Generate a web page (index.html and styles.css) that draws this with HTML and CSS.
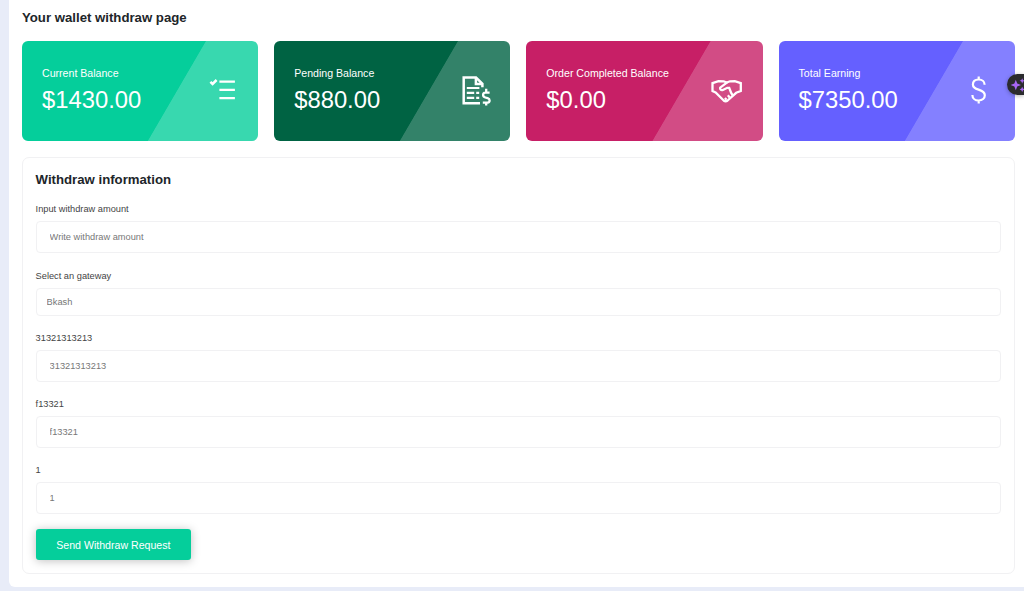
FILE: index.html
```
<!DOCTYPE html>
<html lang="en">
<head>
    <meta charset="UTF-8">
    <meta name="viewport" content="width=device-width, initial-scale=1.0">
    <title>Wallet Withdraw</title>
    <link rel="stylesheet" href="styles.css">
</head>
<body>
    <div class="page">
        <h1>Your wallet withdraw page</h1>

        <!-- Balance cards -->
        <div class="cards">
            <div class="card green">
                <div class="card-text">
                    <p>Current Balance</p>
                    <h2>$1430.00</h2>
                </div>
                <svg class="card-icon" viewBox="0 0 34 34">
                    <path d="M5.4 7.8l2.2 2.2 4-4" stroke-width="2.5"/>
                    <path d="M14.4 7.7h15.5M14.4 15.8h15.5M14.4 24.1h15.5" stroke-width="2.3"/>
                </svg>
            </div>
            <div class="card dark">
                <div class="card-text">
                    <p>Pending Balance</p>
                    <h2>$880.00</h2>
                </div>
                <svg class="card-icon" viewBox="0 0 34 34">
                    <path d="M23 29.2H6.7V3.4H19l6.4 6.4v3.4M18.9 3.6v6.3h6.4" stroke-width="2.5"/>
                    <path d="M9.8 14h12.6M9.8 18.9h7.4M9.8 23.8h7.4M19.2 18.9h3M19.2 23.8h3" stroke-width="2.2"/>
                    <path d="M32.6 18.6h-4.3a2.4 2.4 0 0 0-2.2 2.4c0 1.400.9 2.100 2.200 2.500l2.300.7c1.300.4 2 1.100 2 2.300a2.200 2.200 0 0 1-2 2.200h-4.800M29.200 14.800v3.800M29.200 28.600v3" stroke-width="2.3"/>
                </svg>
            </div>
            <div class="card pink">
                <div class="card-text">
                    <p>Order Completed Balance</p>
                    <h2>$0.00</h2>
                </div>
                <svg class="card-icon" viewBox="0 0 34 34">
                    <path d="M5.600 18.500L2.500 17V9.200l6-2 5.200.1 3 1.300 3.300-1.300 4.800-.1 6 2V17l-4.600 1.800-8.600 7.700c-1.200 1-2.700 1-3.900 0z" stroke-width="2.300"/>
                    <path d="M17.200 8.400l-7 5.200c-.5 1.800.8 3 2.700 2.400l4.400-2.200h1.900l2 5.200M21.200 19l1.500 2.300M17.900 21.300l1.800 2.300M14.900 24l1.600 1.800" stroke-width="2.300"/>
                </svg>
            </div>
            <div class="card purple">
                <div class="card-text">
                    <p>Total Earning</p>
                    <h2>$7350.00</h2>
                </div>
                <svg class="card-icon" viewBox="0 0 34 34">
                    <path d="M22.600 10.800c0-3-2.300-5.300-5.900-5.300s-5.800 2-5.800 4.900c0 2.600 1.700 4 5.700 5.200 4.200 1.300 6.200 3 6.200 5.700 0 3-2.500 5.200-6.100 5.200s-6.300-2.300-6.300-5.600M16.700 2.500v3M16.700 26.400v3.200" stroke-width="2.200"/>
                </svg>
            </div>
        </div>

        <!-- Withdraw form -->
        <form class="withdraw">
            <h3>Withdraw information</h3>

            <label for="amount">Input withdraw amount</label>
            <input type="text" id="amount" placeholder="Write withdraw amount">

            <label for="gateway">Select an gateway</label>
            <select id="gateway">
                <option>Bkash</option>
            </select>

            <label for="field1">31321313213</label>
            <input type="text" id="field1" placeholder="31321313213">

            <label for="field2">f13321</label>
            <input type="text" id="field2" placeholder="f13321">

            <label for="field3">1</label>
            <input type="text" id="field3" placeholder="1">

            <button type="button">Send Withdraw Request</button>
        </form>
    </div>

    <!-- Floating assistant button -->
    <div class="assistant">
        <svg viewBox="0 0 17 22">
            <path d="M8.800 5.800l1.400 3.800 3.800 1.400-3.800 1.400-1.400 3.800-1.400-3.800L3.600 11l3.800-1.400z"/>
            <path d="M15.200 4.200l.8 1.800 1.800.8-1.800.8-.8 1.800-.8-1.800-1.800-.8 1.800-.8zM15.200 12.800l.8 1.800 1.800.8-1.800.8-.8 1.800-.8-1.800-1.800-.8 1.800-.8z"/>
        </svg>
    </div>
</body>
</html>
```
FILE: styles.css
```
* {
    box-sizing: border-box;
}

body {
    font-family: "Liberation Sans", Arial, sans-serif;
    background-color: #e8ecf8;
    color: #212529;
    margin: 0;
    height: 591px;
    overflow: hidden;
}

h1, h2, h3, p {
    margin: 0;
    font-weight: normal;
}

.page {
    margin-left: 8.5px;
    height: 587px;
    padding: 9px 9.3px 0 13.5px;
    background: #fff;
    border-radius: 0 0 0 6px;
}

h1 {
    font-size: 13.2px;
    font-weight: bold;
    line-height: 18px;
}

.cards {
    display: grid;
    grid-template-columns: repeat(4, 1fr);
    gap: 16px;
    margin-top: 14.4px;
}

.card {
    display: flex;
    align-items: center;
    justify-content: space-between;
    height: 100px;
    padding: 0 19px 0 20px;
    border-radius: 6px;
    color: #fff;
}

.green {
    background: linear-gradient(120.2deg, #05ce9b 62.4%, #38d8af 62.7%);
}

.dark {
    background: linear-gradient(120.2deg, #006343 62.4%, #338269 62.7%);
}

.pink {
    background: linear-gradient(120.2deg, #c71f66 62.4%, #d24c85 62.7%);
}

.purple {
    background: linear-gradient(120.2deg, #6560ff 62.4%, #8480ff 62.7%);
}

.card-text {
    margin-bottom: 4px;
}

.card-text p {
    font-size: 10.6px;
    line-height: 16px;
}

.card-text h2 {
    font-size: 23.8px;
    line-height: 28px;
    margin-top: 5px;
}

.card-icon {
    width: 34px;
    height: 34px;
    fill: none;
    stroke: #fff;
}

.withdraw {
    display: flex;
    flex-direction: column;
    align-items: flex-start;
    height: 417px;
    margin-top: 15.6px;
    padding: 12px 13px 0 12.6px;
    border: 1px solid #f1f1f3;
    border-radius: 7px;
}

h3 {
    font-size: 13.2px;
    font-weight: bold;
    line-height: 19px;
    margin-bottom: 13.4px;
}

label {
    font-size: 9.25px;
    line-height: 14px;
    color: #444;
    margin-bottom: 5px;
}

input, select {
    width: 100%;
    height: 32px;
    flex-shrink: 0;
    padding: 0 13px;
    margin-bottom: 15.2px;
    border: 1px solid #f1f1f3;
    border-radius: 4px;
    background: #fff;
    font-family: inherit;
    font-size: 9.25px;
    color: #777;
}

input::placeholder {
    color: #777;
}

select {
    appearance: none;
    height: 28px;
    padding: 0 10px;
}

button {
    width: 155.5px;
    height: 31px;
    border: none;
    border-radius: 3px;
    background: #05ce9b;
    color: #fff;
    font-family: inherit;
    font-size: 10.6px;
    box-shadow: 0 1px 10px rgba(0, 0, 0, 0.25);
}

.assistant {
    position: absolute;
    top: 74px;
    right: 0;
    width: 17px;
    height: 21px;
    border-radius: 11px 0 0 11px;
    background: #2b2b2e;
    box-shadow: 0 1px 4px rgba(0, 0, 0, 0.3);
}

.assistant svg {
    display: block;
    width: 17px;
    height: 22px;
    fill: #a866f5;
}
```
